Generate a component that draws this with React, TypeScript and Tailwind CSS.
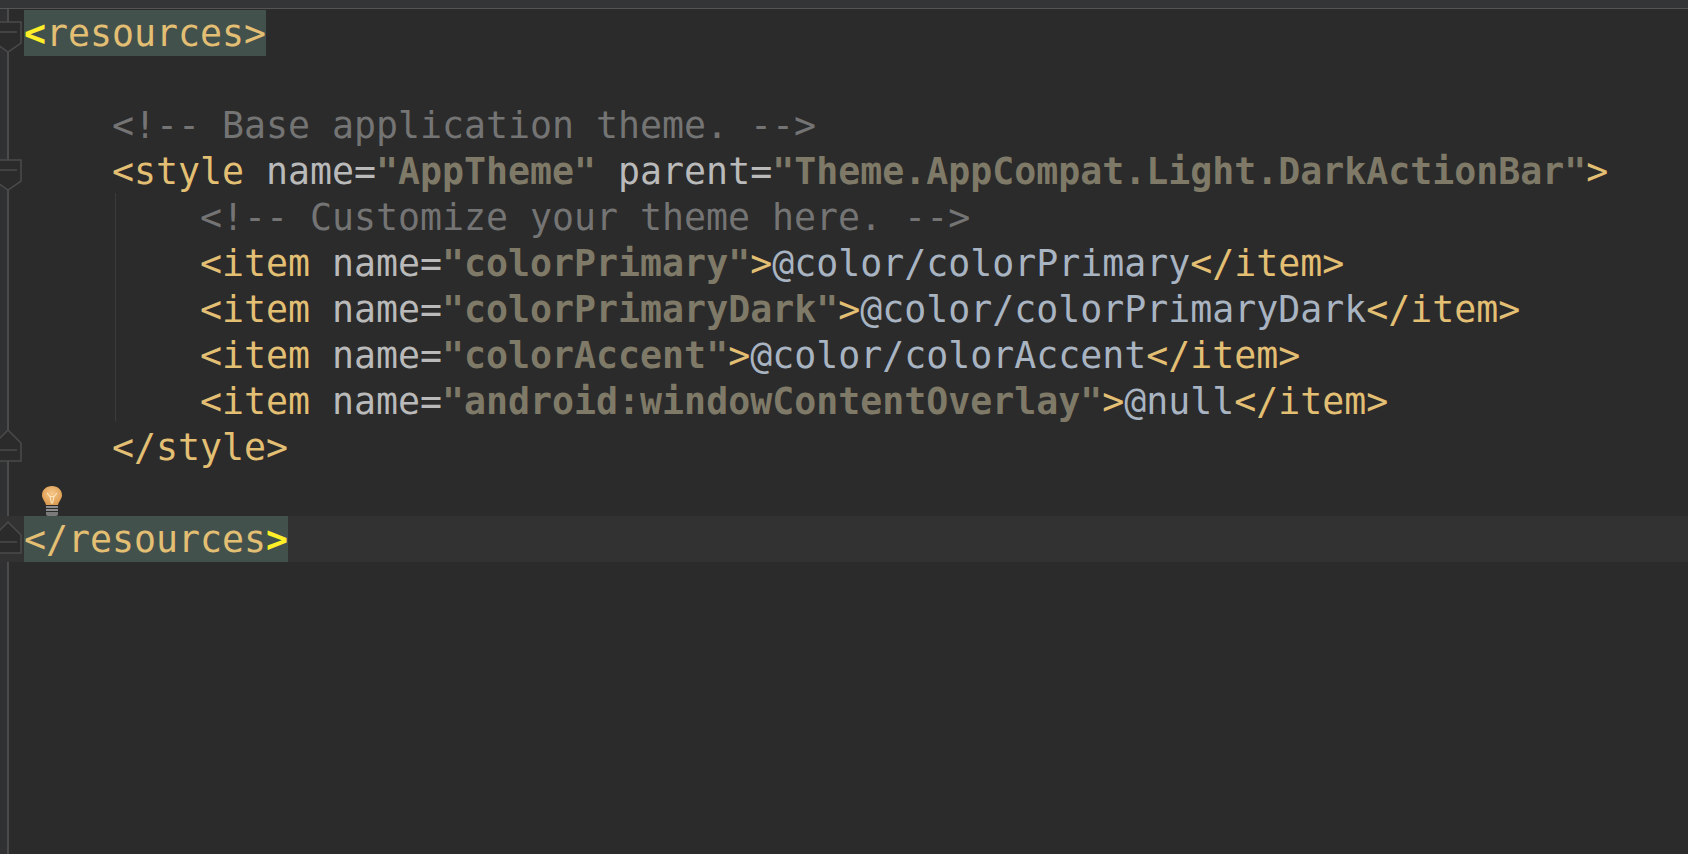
const C = {
  tag: 'text-[#e3bf74]',
  attr: 'text-[#bababa]',
  str: 'text-[#7f7a68] font-bold',
  val: 'text-[#a9b4c2]',
  cmt: 'text-[#747474]',
};

function Item({ name, value }: { name: string; value: string }) {
  return (
    <>
      <span className={C.tag}>{'<item'}</span>
      <span className={C.attr}> name=</span>
      <span className={C.str}>"{name}"</span>
      <span className={C.tag}>{'>'}</span>
      <span className={C.val}>{value}</span>
      <span className={C.tag}>{'</item>'}</span>
    </>
  );
}

function Fold({ up }: { up?: boolean }) {
  return (
    <svg width="24" height="46" viewBox="0 0 24 46" fill="none" stroke="#4b4b4b" strokeWidth="1.5" className="absolute left-0 top-0">
      {up ? (
        <>
          <path d="M-5 37V19L8 6L21 19V37Z" fill="#2b2b2b" />
          <path d="M0 26H17" />
        </>
      ) : (
        <>
          <path d="M-5 12V33L8 42L21 33V12Z" fill="#2b2b2b" />
          <path d="M0 22H17" />
        </>
      )}
    </svg>
  );
}

function Bulb() {
  return (
    <svg width="24" height="32" viewBox="0 0 24 32" className="absolute left-[40px] top-[15px]">
      <defs>
        <radialGradient id="glow" cx="50%" cy="40%" r="60%">
          <stop offset="0%" stopColor="#f6c888" />
          <stop offset="100%" stopColor="#dc9a50" />
        </radialGradient>
      </defs>
      <path d="M12 1C6 1 2 5 2 10c0 4 3 6 4 10h12c1-4 4-6 4-10 0-5-4-9-10-9Z" fill="url(#glow)" />
      <path d="M7 8l3 3.5h4l3-3.5M10 11.5l1.5 7M14 11.5l-1.5 7" stroke="#fbe6c0" strokeWidth="1.1" fill="none" />
      <rect x="6" y="21" width="12" height="2" fill="#8c8c8c" />
      <rect x="6" y="24" width="12" height="2" fill="#8c8c8c" />
      <path d="M6 27h12v2c0 1-1 2-2 2H8c-1 0-2-1-2-2Z" fill="#7a7a7a" />
    </svg>
  );
}

function Row({ children, fold, active, bulb }: { children?: React.ReactNode; fold?: 'down' | 'up'; active?: boolean; bulb?: boolean }) {
  return (
    <div className={`flex h-[46px] ${active ? 'bg-[#323232]' : ''}`}>
      <div className="relative w-6 shrink-0">
        {fold && <Fold up={fold === 'up'} />}
        {bulb && <Bulb />}
      </div>
      <div className="whitespace-pre leading-[48px]">{children}</div>
    </div>
  );
}

export default function App() {
  return (
    <div
      className="flex h-[854px] w-[1688px] flex-col overflow-hidden bg-[#2b2b2b] text-[36.55px]"
      style={{ fontFamily: '"DejaVu Sans Mono", monospace' }}
    >
      <div className="h-[9px] shrink-0 border-b border-[#555555] bg-[#333537]" />
      <div className="relative flex-1 pt-px">
        <div className="absolute bottom-0 left-[7px] top-0 w-0.5 bg-[#4b4b4b]" />
        <div className="absolute left-0 top-0 bottom-0 w-[7px] bg-[#2f3132]" />
        <div className="absolute left-[115px] top-[184px] h-[229px] w-px bg-[#3b3b3b]" />
        <div className="relative">
          <Row fold="down">
            <span className="inline-block h-[46px] bg-[#43514d] align-top">
              <span className="font-bold text-[#ffef28]">{'<'}</span>
              <span className={C.tag}>resources</span>
              <span className={C.tag}>{'>'}</span>
            </span>
          </Row>
          <Row />
          <Row>
            <span className={C.cmt}>{'    <!-- Base application theme. -->'}</span>
          </Row>
          <Row fold="down">
            <span>{'    '}</span>
            <span className={C.tag}>{'<style'}</span>
            <span className={C.attr}> name=</span>
            <span className={C.str}>"AppTheme"</span>
            <span className={C.attr}> parent=</span>
            <span className={C.str}>"Theme.AppCompat.Light.DarkActionBar"</span>
            <span className={C.tag}>{'>'}</span>
          </Row>
          <Row>
            <span className={C.cmt}>{'        <!-- Customize your theme here. -->'}</span>
          </Row>
          <Row>
            {'        '}
            <Item name="colorPrimary" value="@color/colorPrimary" />
          </Row>
          <Row>
            {'        '}
            <Item name="colorPrimaryDark" value="@color/colorPrimaryDark" />
          </Row>
          <Row>
            {'        '}
            <Item name="colorAccent" value="@color/colorAccent" />
          </Row>
          <Row>
            {'        '}
            <Item name="android:windowContentOverlay" value="@null" />
          </Row>
          <Row fold="up">
            {'    '}
            <span className={C.tag}>{'</style>'}</span>
          </Row>
          <Row bulb />
          <Row fold="up" active>
            <span className="inline-block h-[46px] bg-[#43514d] align-top">
              <span className={C.tag}>{'</resources'}</span>
              <span className="font-bold text-[#ffef28]">{'>'}</span>
            </span>
          </Row>
        </div>
      </div>
    </div>
  );
}
